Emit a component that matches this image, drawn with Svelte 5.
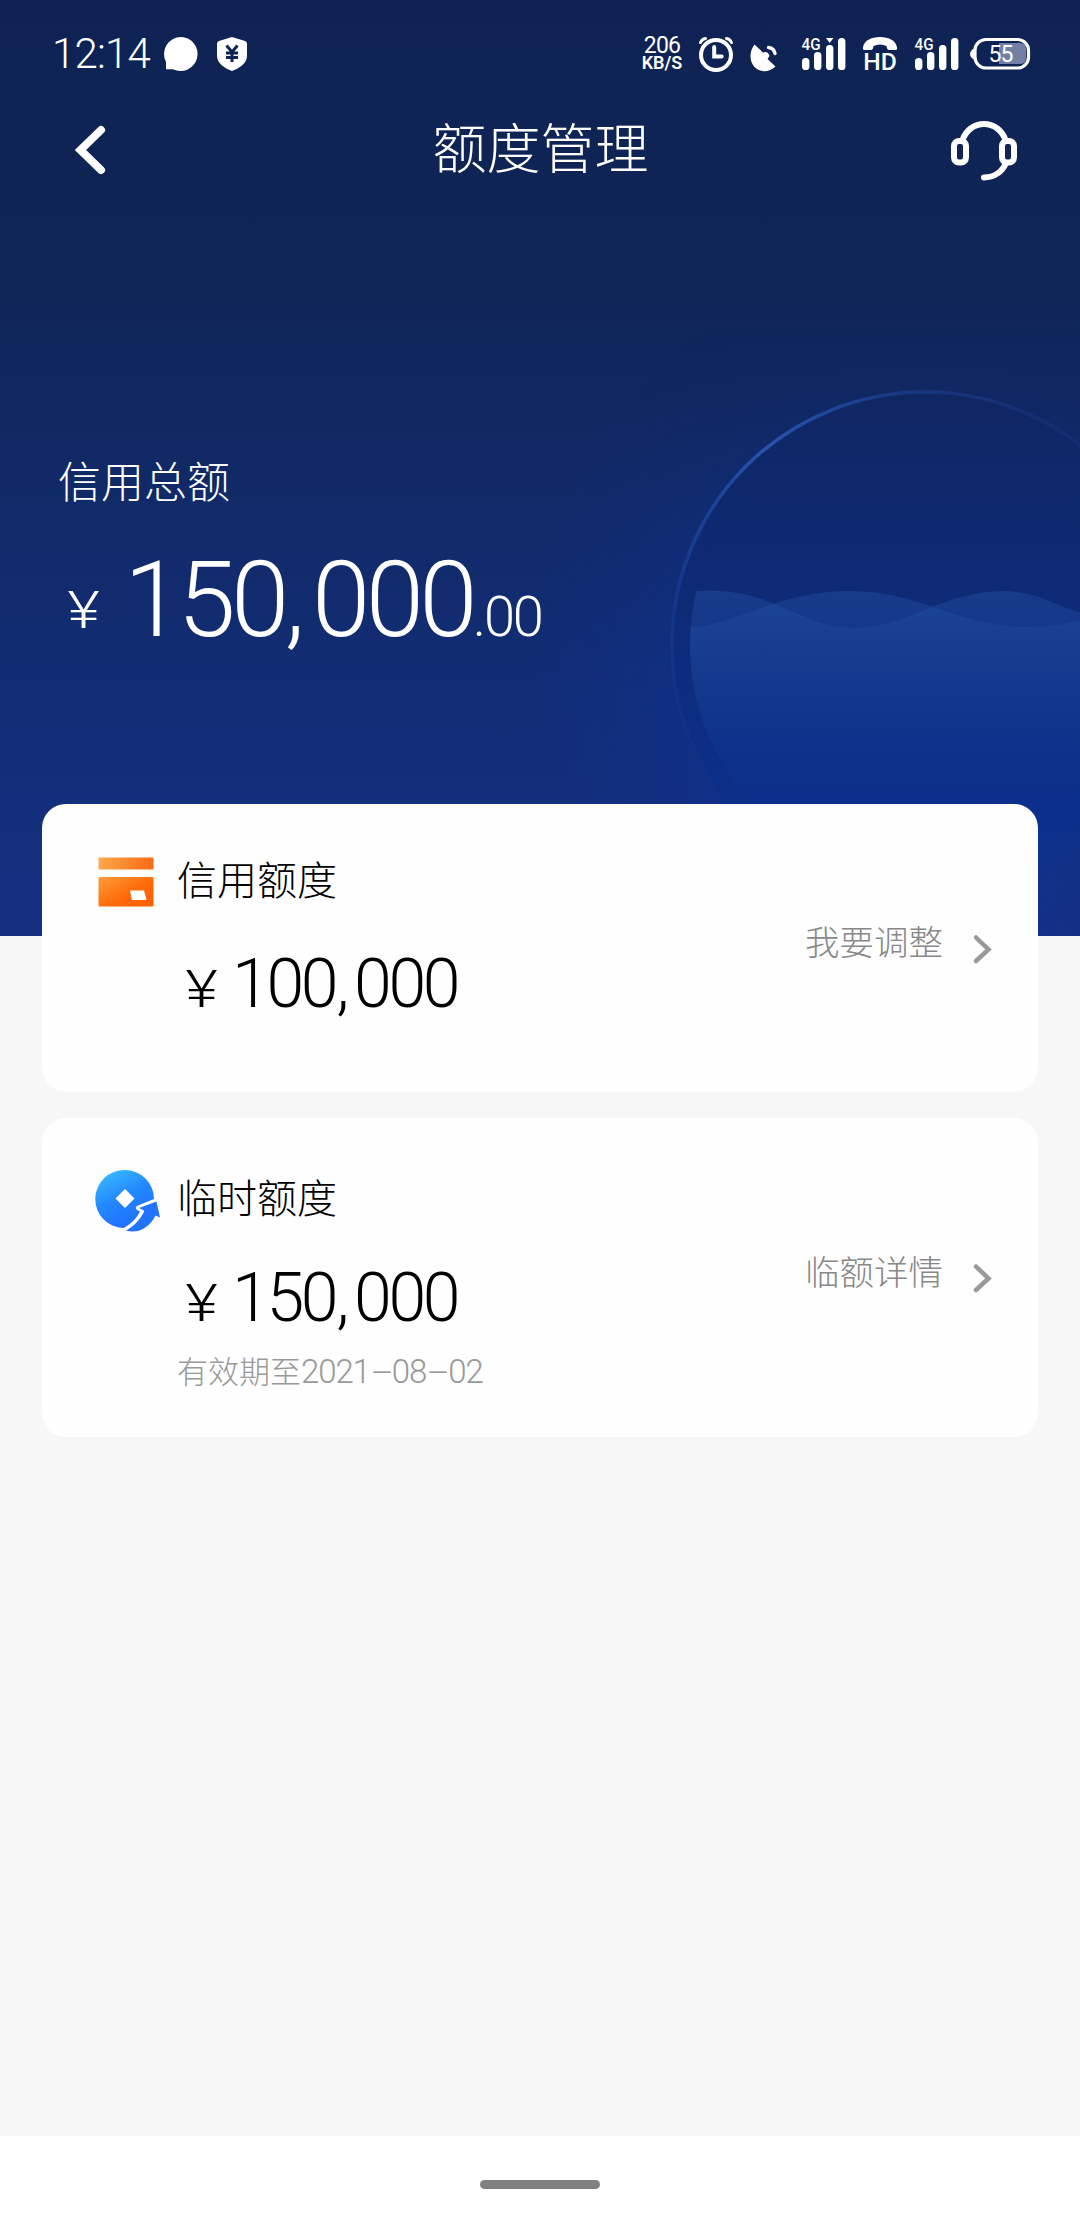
<script lang="ts">
  const limits = [
    { id: 'credit', title: '信用额度', amount: '100,000', action: '我要调整', expires: [] },
    { id: 'temp', title: '临时额度', amount: '150,000', action: '临额详情', expires: ['2021', '08', '02'] }
  ];
</script>

{#snippet signal(roaming: boolean)}
  <svg class="signal" width="44" height="34" viewBox="0 0 44 34">
    <text x="-0.5" y="13" font-size="16" textLength="19" lengthAdjust="spacingAndGlyphs">4G</text>
    <rect x="0" y="21" width="7.4" height="12" rx="3.6" />
    <rect x="12" y="15" width="7.4" height="18" rx="3.6" />
    <rect x="24" y="8" width="7.4" height="25" rx="3.6" />
    <rect x="36" y="1" width="7.4" height="32" rx="3.6" />
    {#if roaming}
      <path d="M24 1h7.4l-3.7 5z" />
    {/if}
  </svg>
{/snippet}

{#snippet digits(value: string)}
  <span class="whole">{#each value.split(',') as group, i}{#if i > 0}<span class="comma">,</span>{/if}{group}{/each}</span>
{/snippet}

<div class="page">
  <header class="hero">
    <svg class="globe" width="560" height="936" viewBox="520 0 560 936">
      <defs>
        <linearGradient id="ring" x1="0" y1="0.35" x2="0.8" y2="0.1">
          <stop offset="0" stop-color="#1c4099" stop-opacity="0.6" />
          <stop offset="0.3" stop-color="#2b54b0" />
          <stop offset="0.62" stop-color="#1f4598" stop-opacity="0.6" />
          <stop offset="1" stop-color="#1f4598" stop-opacity="0.2" />
        </linearGradient>
        <linearGradient id="ringFade" gradientUnits="userSpaceOnUse" x1="0" y1="560" x2="0" y2="810">
          <stop offset="0" stop-color="#fff" />
          <stop offset="1" stop-color="#000" />
        </linearGradient>
        <linearGradient id="ball" x1="0" y1="0" x2="0" y2="1">
          <stop offset="0" stop-color="#0f2662" />
          <stop offset="0.45" stop-color="#0e2a77" />
          <stop offset="0.85" stop-color="#0a2f8c" />
          <stop offset="1" stop-color="#10318c" stop-opacity="0" />
        </linearGradient>
        <linearGradient id="water" gradientUnits="userSpaceOnUse" x1="0" y1="590" x2="0" y2="800">
          <stop offset="0" stop-color="#2453a5" stop-opacity="0.42" />
          <stop offset="1" stop-color="#0b3090" stop-opacity="0.15" />
        </linearGradient>
        <radialGradient id="halo">
          <stop offset="0.6" stop-color="#0e349a" stop-opacity="0.42" />
          <stop offset="1" stop-color="#10318c" stop-opacity="0.12" />
        </radialGradient>
        <linearGradient id="fade" x1="0" y1="0" x2="0" y2="1">
          <stop offset="0.35" stop-color="#000" />
          <stop offset="0.75" stop-color="#fff" />
        </linearGradient>
        <mask id="haloMask"><rect x="520" y="0" width="560" height="936" fill="url(#fade)" /></mask>
        <mask id="ringMask"><rect x="520" y="0" width="560" height="936" fill="url(#ringFade)" /></mask>
        <clipPath id="inner"><circle cx="925" cy="645" r="235" /></clipPath>
      </defs>
      <circle cx="925" cy="645" r="385" fill="url(#halo)" mask="url(#haloMask)" />
      <circle cx="925" cy="645" r="253" fill="url(#ball)" opacity="0.75" />
      <g mask="url(#ringMask)">
        <circle cx="925" cy="645" r="253" fill="none" stroke="url(#ring)" stroke-width="3.5" />
      </g>
      <g clip-path="url(#inner)" fill="url(#water)">
        <path d="M680 592C692 591 712 590 730 592C775 596 808 628 855 628C905 628 945 591 1003 591C1035 591 1055 606 1090 616V936H680Z" />
        <path d="M680 628C735 628 775 591 850 591C920 591 960 627 1025 627C1055 627 1070 623 1090 618V936H680Z" />
      </g>
    </svg>

    <div class="status">
      <div class="status-left">
        <span class="time">12:14</span>
        <svg width="36" height="36" viewBox="0 0 36 36">
          <path fill="#fff" d="M18 1a17 17 0 1 1-8 32.200H3V26A17 17 0 0 1 18 1z" />
        </svg>
        <svg class="shield" width="32" height="36" viewBox="0 0 32 36">
          <path fill="#fff" d="M16 1l13 4q2 .5 2 2.500V20c0 7-7 12-15 15C8 32 1 27 1 20V7.500Q1 5.500 3 5z" />
          <path fill="none" stroke="#0f2454" stroke-width="3" d="M10.500 9.500L16 16l5.500-6.500M16 15v11M10 17h12M10 21.500h12" />
        </svg>
      </div>
      <div class="status-right">
        <div class="speed"><span>206</span><b>KB/S</b></div>
        <svg class="alarm" width="36" height="36" viewBox="0 0 36 36" fill="none" stroke="#fff">
          <circle cx="18" cy="19" r="15" stroke-width="4" />
          <path d="M16.200 11v9.500h7.500" stroke-width="4" stroke-linecap="round" />
          <path d="M2.500 6.500Q4 3 7.500 2.500M33.500 6.500Q32 3 28.500 2.500" stroke-width="3" stroke-linecap="round" />
        </svg>
        <svg class="dish" width="28" height="30" viewBox="0 0 28 30">
          <path fill="#fff" d="M4.500 2.500L13 10.500q5-2 6.500 3.500l-2 3 8 7.500C19 30.500 10 31 4 24.500C-1 18-.500 9 4.500 2.500z" />
          <path fill="none" stroke="#fff" stroke-width="3.400" stroke-linecap="round" d="M18.500 5.500q5.500.500 6.500 6" />
        </svg>
        {@render signal(true)}
        <svg class="hd" width="36" height="36" viewBox="0 0 36 36">
          <path fill="#fff" d="M1 11.500C2 4.500 9 1 18 1s16 3.500 17 10.500q.5 2.500-1.500 2.500H27q-2 0-2.500-4Q18 7 11.500 10q-.5 4-2.500 4H2.500Q.5 14 1 11.500z" />
          <text x="1.200" y="34" font-size="24" textLength="33.500" lengthAdjust="spacingAndGlyphs">HD</text>
        </svg>
        {@render signal(false)}
        <svg class="battery" width="60" height="32" viewBox="0 0 60 32">
          <path d="M29 5h21q6 0 6 6v9q0 6-6 6H29z" fill="#7380a6" />
          <rect x="5" y="1.500" width="53.500" height="28.500" rx="11" fill="none" stroke="#fff" stroke-width="3.200" />
          <path fill="#fff" d="M5 10q-5 2.500-5 6t5 6z" />
          <text class="percent" x="31" y="24" font-size="23" text-anchor="middle" textLength="25">55</text>
        </svg>
      </div>
    </div>

    <nav class="nav">
      <svg width="40" height="54" viewBox="0 0 40 54" fill="none" stroke="#fff" stroke-width="8" stroke-linecap="round">
        <path d="M31 7L10.500 27L31 47" />
      </svg>
      <h1>额度管理</h1>
      <svg class="headset" width="70" height="64" viewBox="0 0 70 64" fill="none" stroke="#fff" stroke-width="6" stroke-linecap="round">
        <rect x="5" y="24" width="12" height="21.500" rx="5" />
        <rect x="53" y="24" width="12" height="21.500" rx="5" />
        <path d="M13.500 23C17 13 25.500 7 35 7s18 6 21.500 16M57 46C53 55 45 60.500 35 60.500" />
      </svg>
    </nav>

    <div class="total">
      <div class="total-label">信用总额</div>
      <div class="total-amount">
        <span class="yen">¥</span>{@render digits('150,000')}<span class="cents">.00</span>
      </div>
    </div>
  </header>

  <main class="cards">
    {#each limits as limit (limit.id)}
      <section class="card {limit.id}">
        <div class="icon">
          {#if limit.id === 'credit'}
            <svg width="56" height="50" viewBox="0 0 56 50">
              <defs>
                <linearGradient id="orangeTop" x1="0" y1="0" x2="1" y2="0">
                  <stop offset="0" stop-color="#ffa84c" />
                  <stop offset="1" stop-color="#fb6a14" />
                </linearGradient>
                <linearGradient id="orange" x1="0" y1="0" x2="1" y2="0.9">
                  <stop offset="0" stop-color="#ff9c3c" />
                  <stop offset="0.6" stop-color="#ff6a08" />
                  <stop offset="1" stop-color="#ff5f00" />
                </linearGradient>
              </defs>
              <rect x="0.500" y="0.500" width="55" height="12" rx="1" fill="url(#orangeTop)" />
              <rect x="0.500" y="20" width="55" height="29.500" rx="1" fill="url(#orange)" />
              <path d="M32 33.500h14l2.500 9.500H34z" fill="#fff" />
            </svg>
          {:else}
            <svg width="66" height="64" viewBox="0 0 66 64">
              <defs>
                <linearGradient id="blue" x1="0.100" y1="0" x2="0.600" y2="1">
                  <stop offset="0" stop-color="#3cc0ff" />
                  <stop offset="0.500" stop-color="#2389ff" />
                  <stop offset="1" stop-color="#1f6dff" />
                </linearGradient>
              </defs>
              <path fill="url(#blue)" d="M30 1A29 29 0 0 1 59 30L43 36.500q-4 2-1 4.500l3 1.500C41 50 36 55 28.500 59A29 29 0 1 1 30 1z" />
              <path fill="#fff" d="M30 20l9.500 9.500-9.500 9.500-9.500-9.500z" />
              <path fill="#2274ff" d="M31 61.500Q42 56 49 43q.5-1.500-1-2l-4-2L61.500 32.500l3.500 16-4.500-2C55 58 43 65.500 31 61.500z" />
            </svg>
          {/if}
        </div>
        <div class="info">
          <h2>{limit.title}</h2>
          <div class="amount"><span class="yen">¥</span>{@render digits(limit.amount)}</div>
          {#if limit.expires.length}
            <p class="note">有效期至<span class="date">{#each limit.expires as part, i}{#if i > 0}<i>-</i>{/if}{part}{/each}</span></p>
          {/if}
        </div>
        <div class="action">
          <span>{limit.action}</span>
          <svg width="20" height="30" viewBox="0 0 20 30" fill="none" stroke="#999" stroke-width="4.500" stroke-linecap="round">
            <path d="M3 3.500L15.500 15.500L3 27" />
          </svg>
        </div>
      </section>
    {/each}
  </main>

  <footer class="gesture"><div class="pill"></div></footer>
</div>

<style>
  :global(body) {
    margin: 0;
  }

  .page {
    display: flex;
    flex-direction: column;
    width: 1080px;
    height: 2232px;
    background: #f7f7f7;
    font-family: Roboto, 'Noto Sans CJK SC', sans-serif;
    font-weight: 300;
    overflow: hidden;
  }

  .page svg {
    display: block;
    flex: none;
    overflow: visible;
  }

  h1, h2, p {
    margin: 0;
    font-weight: 300;
  }

  .hero {
    position: relative;
    height: 936px;
    flex: none;
    color: #fff;
    background: linear-gradient(#0e2353 0, #0f2556 260px, #112a68 500px, #122d75 700px, #153082 936px);
  }

  .page .globe {
    position: absolute;
    right: 0;
    top: 0;
    overflow: hidden;
  }

  .status, .nav, .total {
    position: relative;
  }

  .status {
    display: flex;
    justify-content: space-between;
    align-items: center;
    height: 108px;
    box-sizing: border-box;
    padding: 0 50px 0 52px;
  }

  .status-left, .status-right {
    display: flex;
    align-items: center;
  }

  .time {
    width: 111px;
    font-size: 42px;
    letter-spacing: -0.8px;
    line-height: 50px;
  }

  .shield {
    margin-left: 17px;
  }

  .status text {
    fill: #fff;
    font-weight: 500;
  }

  .status .percent {
    font-weight: 400;
  }

  .speed {
    display: flex;
    flex-direction: column;
    align-items: center;
    width: 42px;
    line-height: 17px;
  }

  .speed span {
    font-size: 23px;
    font-weight: 400;
    letter-spacing: -0.8px;
  }

  .speed b {
    font-size: 18px;
    font-weight: 600;
  }

  .alarm {
    margin-left: 15px;
  }

  .dish {
    margin: 5px 0 0 16px;
  }

  .signal {
    margin-left: 24px;
    fill: #fff;
  }

  .hd {
    margin-left: 16px;
  }

  .hd + .signal {
    margin-left: 17px;
  }

  .battery {
    margin-left: 11px;
  }

  .nav {
    display: flex;
    justify-content: space-between;
    align-items: center;
    height: 84px;
    padding: 0 61px 0 70px;
  }

  .headset {
    margin-top: -3px;
  }

  h1 {
    margin-left: 22px;
    margin-top: 1px;
    font-size: 54px;
    line-height: 80px;
  }

  .total {
    padding: 258px 0 0 58px;
  }

  .total-label {
    font-size: 43px;
    line-height: 66px;
  }

  .total-amount {
    display: flex;
    align-items: baseline;
    margin-top: 20px;
    line-height: 130px;
  }

  .yen {
    transform: scaleX(1.2);
    transform-origin: left;
  }

  .total-amount .yen {
    position: relative;
    top: -8px;
    width: 66px;
    padding-left: 8px;
    box-sizing: border-box;
    font-size: 52px;
  }

  .total-amount .whole {
    font-size: 105px;
    letter-spacing: -4.700px;
  }

  .total-amount .comma {
    margin-right: 12px;
  }

  .total-amount .cents {
    font-size: 56px;
    letter-spacing: -2.200px;
  }

  .cards {
    position: relative;
    display: flex;
    flex-direction: column;
    gap: 26px;
    margin-top: -132px;
    padding: 0 42px;
  }

  .card {
    display: flex;
    height: 288px;
    border-radius: 24px;
    background: #fefefe;
    color: #000;
  }

  .card.temp {
    height: 319px;
  }

  .icon {
    width: 135px;
    box-sizing: border-box;
    padding: 53px 0 0 56px;
  }

  .temp .icon {
    padding: 51px 0 0 53px;
  }

  .info {
    flex: 1;
    padding-top: 48px;
  }

  h2 {
    font-size: 40px;
    line-height: 60px;
  }

  .amount {
    display: flex;
    align-items: baseline;
    margin-top: 32px;
    line-height: 80px;
  }

  .temp .info {
    padding-top: 52px;
  }

  .temp .amount {
    margin-top: 28px;
  }

  .amount .yen {
    width: 55px;
    padding-left: 7px;
    box-sizing: border-box;
    font-size: 52px;
  }

  .amount .whole {
    font-size: 68px;
    letter-spacing: -3.300px;
  }

  .amount .comma {
    margin: 0 8px 0 1px;
  }

  .note {
    margin-top: 5px;
    font-size: 31px;
    line-height: 46px;
    color: #999;
  }

  .date {
    font-size: 33px;
    letter-spacing: -1.100px;
  }

  .date i {
    display: inline-block;
    width: 22px;
    text-align: center;
    font-style: normal;
    transform: scaleX(2.2);
  }

  .action {
    display: flex;
    align-items: center;
    align-self: flex-start;
    gap: 30px;
    margin-top: 111px;
    padding-right: 45px;
    font-size: 34.500px;
    line-height: 56px;
    color: #888;
  }

  .action svg {
    margin-top: 12px;
  }

  .temp .action {
    margin-top: 127px;
  }

  .temp .action svg {
    margin-top: 10px;
  }

  .gesture {
    display: flex;
    justify-content: center;
    height: 96px;
    margin-top: auto;
    background: #fff;
  }

  .pill {
    width: 120px;
    height: 9px;
    margin-top: 44px;
    border-radius: 5px;
    background: #808080;
  }
</style>
